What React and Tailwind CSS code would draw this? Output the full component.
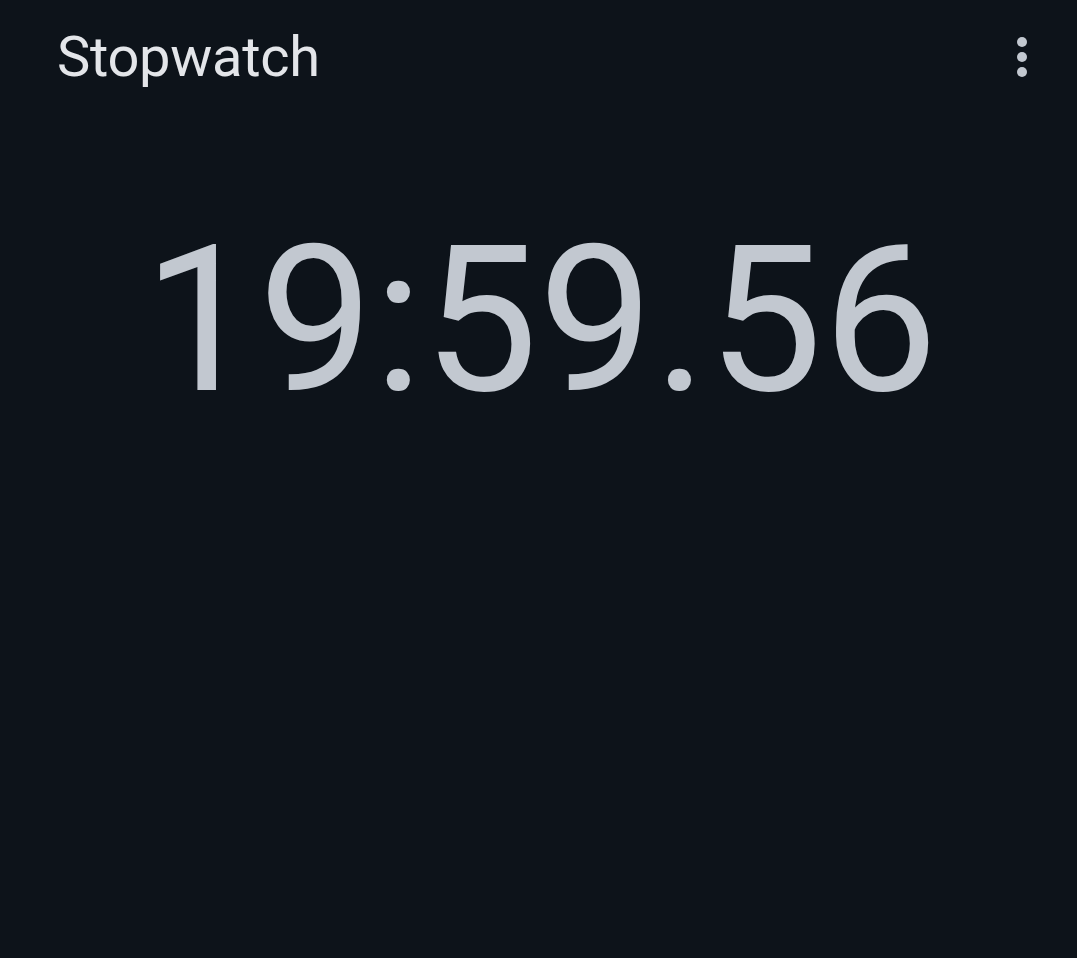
export default function App() {
  return (
    <div className="w-full h-[958px] bg-[#0d131a] flex flex-col">
      <header className="flex items-center justify-between pl-[57px] pr-[42px] pt-[22px]">
        <h1 className="font-['Roboto',sans-serif] text-[56px] leading-[70px] text-[#e3e5e9] tracking-[-0.3px]">
          Stopwatch
        </h1>
        <button className="flex flex-col items-center gap-[5px] p-2">
          <span className="w-[10px] h-[10px] rounded-full bg-[#c2c8d0]" />
          <span className="w-[10px] h-[10px] rounded-full bg-[#c2c8d0]" />
          <span className="w-[10px] h-[10px] rounded-full bg-[#c2c8d0]" />
        </button>
      </header>
      <main className="flex justify-center pt-[103px] pl-[4px]">
        <div className="font-['Roboto',sans-serif] text-[205px] leading-[250px] text-[#c2c8d0] tracking-[0px]">
          19:59.56
        </div>
      </main>
    </div>
  );
}
